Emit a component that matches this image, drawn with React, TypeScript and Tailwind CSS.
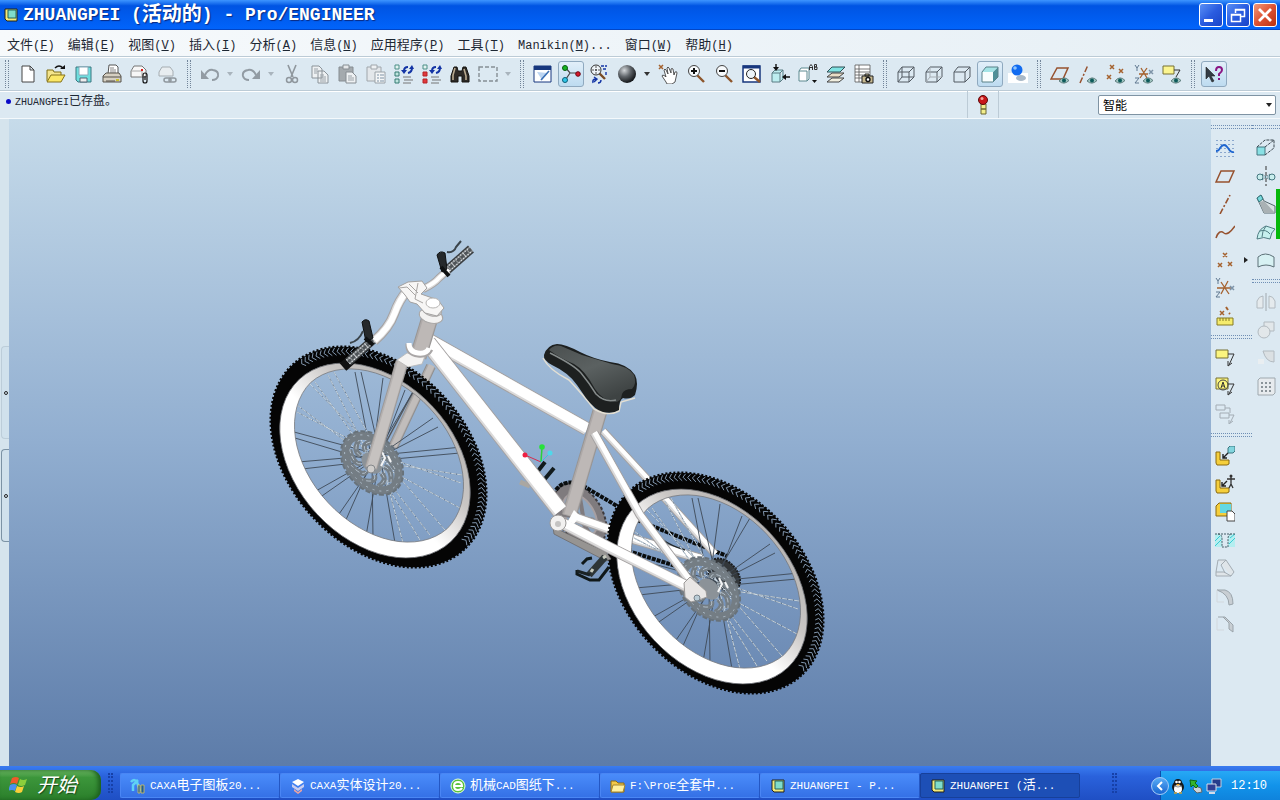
import { Fragment, type ReactNode } from 'react';

const MONO = 'font-["Liberation_Mono","Noto_Sans_CJK_SC",monospace]';

// Latin runs keep the size of the parent, Chinese runs get their own size
function Mixed({ text, cjk }: { text: string; cjk: string }) {
  return (
    <>
      {text.split(/([\u3000-\u9fff]+)/).map((part, i) =>
        i % 2 ? <span key={i} className={cjk}>{part}</span> : <Fragment key={i}>{part}</Fragment>
      )}
    </>
  );
}

/* ---------- icons ---------- */

const X = ({ x, y, c = '#a5622f' }: { x: number; y: number; c?: string }) => (
  <path d={`M${x - 2} ${y - 2}l4 4m0-4l-4 4`} stroke={c} strokeWidth="1.5" />
);

const Eye = () => (
  <>
    <path d="M9 17q5-6 10-.5-5 5-10 .5z" fill="#9fc4c0" stroke="#4b6b6b" strokeWidth=".8" />
    <circle cx="14" cy="16.5" r="2" fill="#0d5a5a" />
  </>
);

const Cube = ({ fill = 'none', back = '' }: { fill?: string; back?: string }) => (
  <>
    <path d="M2 8h11v10H2z" fill={fill} />
    <path d="M2 8l4-5h12l-5 5M13 18l5-5V3" />
    {back && <path d="M2 18l4-5h12M6 13V3" stroke={back} />}
  </>
);

const Tree = ({ c }: { c: string }) => (
  <>
    <path d="M1 1h4v4H1z" fill="#e3f3f0" stroke="#4a8f86" />
    <path d="M1 8h4v4H1zM1 15h4v4H1z" fill={c === 'red' ? '#e2383c' : '#bfe5df'} stroke={c === 'red' ? '#b52227' : '#357b72'} />
    <path d="M10 7q0-4 4-4M18 4q0 4-4 5" stroke="#1334a5" strokeWidth="2" />
    <path d="M7 6h6l-3 4zM15 5l3-4 2 4z" fill="#1334a5" />
    <path d="M9 13h8M10 16h9M9 19h8" stroke="#777" />
  </>
);

const Pipe = () => <path d="M1 6h4v8h9v4l-2 1H2l-1-2z" fill="#f5cf3c" stroke="#8a6a10" />;

const icons: Record<string, ReactNode> = {
  new: <path d="M4 2h8l4 4v12H4zM12 2v4h4" fill="#fff" stroke="#444" />,
  open: (
    <>
      <path d="M1 17V6h6l1 2h7v3" fill="#f4e48c" stroke="#7f6d15" />
      <path d="M1 18l4-7h14l-4 7z" fill="#fbe766" stroke="#85731a" />
      <path d="M9 4q4-4 8 0" stroke="#111" strokeWidth="1.5" /><path d="M14 5h5V1z" fill="#111" />
    </>
  ),
  save: (
    <>
      <path d="M2 3h15v15H4l-2-2z" fill="#6fdede" stroke="#3a7680" />
      <path d="M5 3h9v8H5z" fill="#fff" stroke="#8ab" /><path d="M6 14h7v4H6z" fill="#eee" stroke="#567" />
    </>
  ),
  print: (
    <>
      <path d="M6 10l1-9h7l2 2v8" fill="#fff" stroke="#555" /><path d="M8 4h4M8 6h6M8 8h6" stroke="#888" />
      <path d="M1 12l3-3h13l2 3v6H1z" fill="#d6d0c2" stroke="#56524a" /><path d="M1 13h18M4 17h9" stroke="#55504a" /><path d="M14 15h3v2h-3z" fill="#c8c030" />
    </>
  ),
  attach: (
    <>
      <path d="M1 7l3-5h8l4 4v7H1z" fill="#f7f7f7" stroke="#777" /><path d="M1 7h11v6" stroke="#aaa" /><path d="M11 5h2v2h-2z" fill="#d92020" />
      <path d="M13 17v-6q0-2 2-2t2 2v6q0 2-2 2t-2-2zm2-5v4" stroke="#111" strokeWidth="1.2" />
    </>
  ),
  link: (
    <>
      <path d="M1 8l3-5h8l3 4v5H1z" fill="#e8edf0" stroke="#a6adb2" />
      <rect x="6" y="14" width="7" height="4" rx="2" stroke="#8f979d" strokeWidth="1.5" /><rect x="11" y="14" width="7" height="4" rx="2" stroke="#8f979d" strokeWidth="1.5" />
    </>
  ),
  undo: (
    <>
      <path d="M5 11q3-6 8-5 6 1 5 6-1 4-6 4" stroke="#929ba3" strokeWidth="2" /><path d="M1 6v9h8z" fill="#929ba3" />
    </>
  ),
  redo: (
    <>
      <path d="M15 11q-3-6-8-5-6 1-5 6 1 4 6 4" stroke="#929ba3" strokeWidth="2" /><path d="M19 6v9h-8z" fill="#929ba3" />
    </>
  ),
  cut: (
    <>
      <path d="M6 1l5 12M14 1L9 13" stroke="#8f979d" strokeWidth="1.6" />
      <circle cx="7" cy="16" r="2.5" stroke="#8f979d" strokeWidth="1.5" /><circle cx="13" cy="16" r="2.5" stroke="#8f979d" strokeWidth="1.5" />
    </>
  ),
  copy: (
    <>
      <path d="M2 2h7l3 3v9H2zM8 7h6l4 4v8H8z" fill="#eef1f3" stroke="#8b9399" />
      <path d="M4 5h4M4 7h4M4 9h3M10 11h4M10 13h6M10 15h6M10 17h6" stroke="#9aa2a8" />
    </>
  ),
  paste: (
    <>
      <path d="M1 3h14v14H1z" fill="#a4aaae" stroke="#868d92" /><path d="M5 1h6v4H5z" fill="#e5e8ea" stroke="#868d92" />
      <path d="M8 8h6l4 4v7H8z" fill="#eef1f3" stroke="#868d92" /><path d="M10 12h4M10 14h6M10 16h6" stroke="#9aa2a8" />
    </>
  ),
  pasteSpecial: (
    <>
      <path d="M1 3h14v14H1z" fill="#e3e7ea" stroke="#a0a6ab" /><path d="M5 1h6v4H5z" fill="#eef1f3" stroke="#a0a6ab" />
      <path d="M9 8h10v11H9z" fill="#f4f6f7" stroke="#9aa2a8" /><path d="M11 11h2M11 14h2M11 17h2M14 11h4M14 14h4M14 17h4" stroke="#7f93a6" />
    </>
  ),
  regen: <Tree c="green" />,
  regenManager: <Tree c="red" />,
  find: (
    <>
      <path d="M4 3h3l1 4h4l1-4h3l3 9v6h-7v-6H8v6H1v-6z" fill="#2e2a26" stroke="#15120f" />
      <path d="M5 4l-2 7v5M14 5l2 7v4" stroke="#b9aa90" strokeWidth="1.6" />
    </>
  ),
  select: <path d="M1 3h18v14H1z" stroke="#858e95" strokeDasharray="4 2" strokeWidth="1.4" />,
  repaint: (
    <>
      <path d="M1 2h17v16H1z" fill="#fff" stroke="#17377e" /><path d="M1 2h17v4H1z" fill="#17377e" />
      <path d="M4 8l11 1-6 7z" fill="#bcd5f2" /><path d="M16 7l-8 9" stroke="#3a6fb5" strokeWidth="1.6" />
    </>
  ),
  spin: (
    <>
      <path d="M4 3l5 6h8M9 9l-4 6" stroke="#444" strokeWidth="1.2" />
      <circle cx="4" cy="4" r="2.5" fill="#16b322" stroke="#075d0d" /><circle cx="17" cy="10" r="2.3" fill="#d6182a" stroke="#6e0712" /><circle cx="4" cy="16" r="2.5" fill="#31c6e8" stroke="#0b5f78" />
    </>
  ),
  orient: (
    <>
      <path d="M10 9l6 6" stroke="#7a4a22" strokeWidth="2.4" /><circle cx="7" cy="6" r="5" fill="#eef4f8" stroke="#333" /><circle cx="7" cy="6" r="1" fill="#333" /><path d="M7 2v2M7 8v2M3 6h2M9 6h2" stroke="#555" />
      <path d="M12 2h6M14 5h4M17 8v4" stroke="#1334a5" strokeWidth="1.4" strokeDasharray="3 1" /><path d="M4 19q-1-4 3-4m-2-2l3 2-3 3M9 19q3 0 3-3" stroke="#1334a5" strokeWidth="1.4" />
    </>
  ),
  sphere: <circle cx="10" cy="10" r="9" fill="url(#ball)" />,
  pan: (
    <>
      <X x={3} y={3} />
      <path d="M8 18l-4-6q0-2 3 0l1 1-2-7q1-2 2 0l2 4-1-6q1-2 2 0l2 5V5q1-1 2 0l1 6 1-3q2-1 2 1l-2 9-3 2H9z" fill="#fff" stroke="#444" strokeWidth=".9" />
    </>
  ),
  zoomIn: (
    <>
      <path d="M11 11l7 7" stroke="#8d552a" strokeWidth="2.4" /><circle cx="8" cy="7" r="5.5" fill="#f7fafc" stroke="#444" /><path d="M5 7h6M8 4v6" stroke="#111" strokeWidth="2" />
    </>
  ),
  zoomOut: (
    <>
      <path d="M11 11l7 7" stroke="#8d552a" strokeWidth="2.4" /><circle cx="8" cy="7" r="5.5" fill="#f7fafc" stroke="#444" /><path d="M5 7h6" stroke="#111" strokeWidth="2" />
    </>
  ),
  refit: (
    <>
      <path d="M1 2h17v16H1z" fill="#fff" stroke="#17377e" strokeWidth="1.5" /><path d="M1 3h17" stroke="#17377e" strokeWidth="3" />
      <path d="M12 13l6 5" stroke="#8d552a" strokeWidth="2.4" /><circle cx="9" cy="10" r="4.5" fill="#eef5fa" stroke="#222" />
    </>
  ),
  reorient: (
    <>
      <path d="M2 9h8v9H2zM2 9l3-3h8l-3 3M10 18l3-3V6" fill="#bdeef0" stroke="#5b7d84" />
      <path d="M6 0v5M20 13h-5" stroke="#111" strokeWidth="1.4" /><path d="M3 3h6L6 7zM16 10v6l-4-3z" fill="#111" />
    </>
  ),
  views: (
    <>
      <path d="M1 7l2-3h8v11l-2 2H1zM1 7h8v10" fill="#fff" stroke="#5c8a90" /><path d="M14 16h5l-2.500 3z" fill="#111" />
      <path d="M11.500 6V2.500l1.500-2 1.500 2V6m-3-2.500h3M16.500.5v5h2.500v-2.500h-2.500h2v-2.500z" stroke="#333" />
    </>
  ),
  layers: (
    <>
      <path d="M1 18l5-4h12l-5 4z" fill="#f1efe0" stroke="#444" /><path d="M1 13l5-4h12l-5 4z" fill="#e9ddc6" stroke="#444" /><path d="M1 8l5-5h13l-5 5z" fill="#80e3e3" stroke="#2f4f55" />
    </>
  ),
  viewManager: (
    <>
      <path d="M1 1h15v17H1zM5 1v17M1 5h15M1 8h15M1 11h15M1 14h15" fill="#fff" stroke="#555" strokeWidth=".8" />
      <path d="M8 12h11v7H8zM11 10h4v2h-4z" fill="#c7b990" stroke="#222" /><circle cx="14" cy="15.500" r="2" fill="#fff" stroke="#111" strokeWidth="1.4" />
    </>
  ),
  wireframe: <g stroke="#525a62"><Cube back="#525a62" /></g>,
  hidden: <g stroke="#525a62"><Cube back="#a6adb3" /></g>,
  noHidden: <g stroke="#525a62"><Cube /></g>,
  shading: (
    <>
      <path d="M13 8l5-5v10l-5 5z" fill="#4f9098" /><path d="M2 8l4-5h12l-5 5z" fill="#a5e4e6" /><path d="M2 8h11v10H2z" fill="#f8fdfd" />
      <path d="M2 8v10h11l5-5V3H6z" stroke="#5b8188" />
    </>
  ),
  realism: (
    <>
      <path d="M0 9h20v10H0z" fill="#fff" /><ellipse cx="13" cy="14" rx="5" ry="3" fill="#a9b9c8" />
      <circle cx="9" cy="6" r="5.500" fill="#116bf0" /><circle cx="7" cy="4" r="1.800" fill="#8dc4ff" />
    </>
  ),
  planeDisplay: <><path d="M1 15L7 4h11l-5 11z" stroke="#96512e" strokeWidth="1.5" /><Eye /></>,
  axisDisplay: <><path d="M2 19L10 1" stroke="#96512e" strokeWidth="1.5" strokeDasharray="6 2 2 2" /><Eye /></>,
  pointDisplay: <><X x={6} y={3} /><X x={15} y={7} /><X x={3} y={13} /><Eye /></>,
  csysDisplay: <><path d="M5 10h9M7 4l6 10M13 4L6 14" stroke="#a5622f" strokeWidth="1.3" /><X x={17} y={8} c="#7d93a8" /><path d="M1 1l2 3 2-3M3 4v3M1 14h4l-4 5h4" stroke="#607890" /><Eye /></>,
  noteDisplay: <><path d="M1 2h11v8H1z" fill="#fbf590" stroke="#777035" /><path d="M12 6h6l-4 7" stroke="#333" /><Eye /></>,
  help: <><path d="M2 3v12l3-3 3 6 2-1-3-5h4z" fill="#333b44" stroke="#222" strokeWidth=".6" /><path d="M12 7q0-4 3-4t3 3q0 2-3 4v2M15 14v2" stroke="#8b1583" strokeWidth="2" /></>,

  // feature tools
  sketch: <><path d="M2 2v18M6 2v18M10 2v18M14 2v18M18 2v18" stroke="#3b67a8" strokeDasharray="1 3" /><path d="M1 13q3 0 4-3 4-6 8 0 3 5 6 4" stroke="#1f66d0" strokeWidth="1.800" /></>,
  plane: <path d="M1 16L6 5h13l-5 11z" stroke="#96512e" strokeWidth="1.500" />,
  axis: <path d="M5 20L15 1" stroke="#96512e" strokeWidth="1.600" strokeDasharray="6 2 2 2" />,
  curve: <path d="M1 16q3-9 8-5 4 3 11-7" stroke="#96512e" strokeWidth="1.500" />,
  point: <><X x={10} y={5} /><X x={5} y={15} /><X x={15} y={14} /></>,
  csys: <><path d="M2 10h14M6 4l8 12M13 3L6 16" stroke="#a5622f" strokeWidth="1.300" /><X x={17} y={10} c="#7d93a8" /><path d="M1 0l2 3 2-3M3 3v3M1 14h4l-4 5h4" stroke="#607890" /></>,
  analysis: <><X x={7} y={7} /><path d="M11 1l2 3M14 7l1 1" stroke="#a5622f" strokeWidth="2" /><path d="M2 12h16v7H2z" fill="#f6ec6c" stroke="#857a25" /><path d="M5 12v3M8 12v3M11 12v3M14 12v3" stroke="#857a25" /></>,
  note: <><path d="M1 2h12v8H1z" fill="#fbf57f" stroke="#777035" /><path d="M13 6h6l-5 11m-1-4v5l4-3" stroke="#333" /></>,
  noteA: <><path d="M1 2h12v11H1z" fill="#fbf57f" stroke="#777035" /><circle cx="8" cy="9" r="5" stroke="#444" /><path d="M6 12l2-6 2 6M7 10h2" stroke="#333" /><path d="M13 8h6l-5 10m-1-3v4l4-3" stroke="#333" /></>,
  noteRef: <path d="M1 1h9v5H1zM10 4h5v5M5 9h9v5H5zM14 11h5l-4 8m-1-3v4l4-3" stroke="#a3acb4" />,
  assemble: <><Pipe /><path d="M13 2l2-2h5v5l-2 2h-5z" fill="#83d5de" stroke="#3a7680" /><path d="M13 7l-5 5m0-4v4h4" stroke="#222" strokeWidth="1.400" /></>,
  manikin: <><Pipe /><circle cx="16" cy="2" r="1.500" fill="#333" /><path d="M12 5h8M16 3v7l-2 4M16 10l2 4" stroke="#333" strokeWidth="1.300" /><path d="M12 7l-5 5m0-4v4h4" stroke="#222" strokeWidth="1.400" /></>,
  create: <><path d="M1 4l3-3h12v10l-4 3H1z" fill="#f5cf3c" stroke="#8a6a10" /><path d="M5 2h11v9H5z" fill="#62d8e4" /><path d="M12 9h5l3 3v7h-8z" fill="#fff" stroke="#444" /></>,
  hole: (
    <>
      <path d="M0 4h3q4 0 4 5v8H0zM20 4h-3q-4 0-4 5v8h7z" fill="#b4eef0" /><path d="M5 6l-5 5M6 10l-6 6M15 8l5-4M14 14l6-6" stroke="#38cbd4" />
      <path d="M0 4h20M3 4q4 0 4 5v8h6V9q0-5 4-5" stroke="#425d66" strokeDasharray="2 1" />
    </>
  ),
  cutSolid: <path d="M3 2h8l8 12-3 4H1v-4h8l7 4M3 2L1 14M6 7l5-5M6 7l4 8" fill="#dfe5e9" stroke="#a3acb3" />,
  round: <><path d="M2 4h8q8 2 8 14l-4 1Q14 8 2 4z" fill="#c8ced3" stroke="#9aa4ab" /><path d="M2 4v12h7" stroke="#d2d8dd" /></>,
  chamfer: <><path d="M3 3h7l8 8v7l-4-3V9L8 3" fill="#c8ced3" stroke="#9aa4ab" /><path d="M2 4v12h7" stroke="#d2d8dd" /></>,
  extrude: <><path d="M1 9h8v8H1z" fill="#89e0e4" stroke="#467780" /><path d="M1 9l8-7h9l-9 7M9 17l9-7V2" stroke="#3c4850" strokeDasharray="3 1" /></>,
  revolve: <><path d="M10 0v20" stroke="#333" strokeDasharray="4 2" /><circle cx="4" cy="11" r="3" fill="#c9eeee" stroke="#467780" /><circle cx="16" cy="11" r="3" fill="#c9eeee" stroke="#467780" /><path d="M6 8l8 6M6 14l8-6" stroke="#467780" strokeDasharray="2 1" /></>,
  sweep: <><path d="M1 4l4-3 3 6 11 5v7H8z" fill="#d9e1e3" stroke="#54666c" /><path d="M3 8l5-1 11 12H8z" fill="#a9b1b4" /><path d="M1 4l4-3 2 4-4 3z" fill="#79dadd" stroke="#35757c" /></>,
  blend: <path d="M1 17q1-10 9-13l9 3q-4 3-5 10-6-3-13 0zM4 9q6-2 10 3M10 4q-4 5-4 11" fill="#c6f0ee" stroke="#4f7c82" />,
  style: <path d="M2 17V7q7-6 16 0v10q-8-4-16 0z" fill="#d7f1f3" stroke="#5d7178" />,
  mirror: <><path d="M10 1v18" stroke="#a0a8ae" /><path d="M7 4v12H1V9q2-5 6-5zM13 4v12h6V9q-2-5-6-5z" fill="#e5eaed" stroke="#b2bac0" /></>,
  merge: <><path d="M8 2h10v9H8z" fill="#e2e7ea" stroke="#b2bac0" /><circle cx="8" cy="12" r="6" fill="#e2e7ea" stroke="#b2bac0" /></>,
  trim: <><path d="M7 3h11v11q-8 0-11-11z" fill="#dbe0e3" stroke="#b2bac0" /><path d="M2 11h6v5H2z" fill="#e9eef1" /></>,
  pattern: <><path d="M2 4l2-2h15v15l-2 2H2z" fill="#e7ebee" stroke="#9fa8ae" /><path d="M5 7h11M5 11h11M5 15h11" stroke="#8b949a" strokeWidth="2" strokeDasharray="2 2" /></>,
};

function Glyph({ name }: { name: string }) {
  return (
    <svg viewBox="0 0 20 20" className="size-5" fill="none" aria-hidden="true">
      {icons[name]}
    </svg>
  );
}

function Tool({ name, active = false }: { name: string; active?: boolean }) {
  return (
    <button
      aria-label={name}
      className={`m-px flex size-[26px] shrink-0 items-center justify-center rounded-[3px] border ${
        active ? 'border-[#8fa9bf] bg-linear-to-b from-[#e2eff9] to-[#bddbf0]' : 'border-transparent hover:bg-white/50'
      }`}
    >
      <Glyph name={name} />
    </button>
  );
}

function Caret({ color }: { color: string }) {
  return (
    <svg viewBox="0 0 13 6" className="h-[6px] w-[13px] shrink-0" aria-hidden="true">
      <path d="M3 1h6L6 5z" fill={color} />
    </svg>
  );
}

const Grip = () => (
  <div className="flex w-[14px] shrink-0 justify-center">
    <div className="h-7 w-[4px] border-x border-dotted border-[#73859a]" />
  </div>
);

const HGrip = () => (
  <div className="flex h-[14px] shrink-0 items-center">
    <div className="h-[4px] w-full border-y border-dotted border-[#6f8fb5]" />
  </div>
);

/* ---------- title, menu, toolbar ---------- */

function AppIcon() {
  return (
    <svg viewBox="0 0 16 16" className="size-4 shrink-0" aria-hidden="true">
      <path d="M2 2h12v12H4l-2-2z" fill="#f4ea79" stroke="#23231a" />
      <path d="M5 3h8v8H5z" fill="#7fdccb" stroke="#276258" />
    </svg>
  );
}

function TitleBar() {
  const box = 'flex size-6 items-center justify-center rounded-[3px] border border-white';
  const blue = 'bg-linear-to-br from-[#5b8ff5] via-[#2a5ce0] to-[#1a45c8]';
  return (
    <header className="flex h-[30px] shrink-0 items-center border-b border-[#0246c6] bg-linear-to-b from-[#3d95ff] via-[#0054e3] via-20% to-[#0164fb] px-[3px]">
      <AppIcon />
      <h1 className={`${MONO} ml-1 flex-1 truncate text-[18px] leading-[28px] font-bold whitespace-pre text-white [text-shadow:1px_1px_1px_#0a2a80]`}>
        <Mixed text="ZHUANGPEI (活动的) - Pro/ENGINEER" cjk="align-[-1px] text-[20px] leading-[20px]" />
      </h1>
      <div className="flex gap-[3px]">
        <button aria-label="最小化" className={`${box} ${blue}`}>
          <svg viewBox="0 0 22 22" className="size-[22px]"><path d="M4 15h9v3H4z" fill="#fff" /></svg>
        </button>
        <button aria-label="还原" className={`${box} ${blue}`}>
          <svg viewBox="0 0 22 22" className="size-[22px]" fill="none" stroke="#fff">
            <path d="M8.500 9V5.500h9v7H14M8 6h10" strokeWidth="1.500" /><path d="M4.500 10.500h9v7h-9zM4 11h10" strokeWidth="1.500" />
          </svg>
        </button>
        <button aria-label="关闭" className={`${box} bg-linear-to-br from-[#f0977a] via-[#dd5132] to-[#b9310f]`}>
          <svg viewBox="0 0 22 22" className="size-[22px]"><path d="M5 5l12 12M17 5L5 17" stroke="#fff" strokeWidth="2.800" /></svg>
        </button>
      </div>
    </header>
  );
}

const menus = [
  ['文件', 'F'], ['编辑', 'E'], ['视图', 'V'], ['插入', 'I'], ['分析', 'A'], ['信息', 'N'],
  ['应用程序', 'P'], ['工具', 'T'], ['Manikin', 'M', '...'], ['窗口', 'W'], ['帮助', 'H'],
];

function MenuBar() {
  return (
    <nav className={`${MONO} flex h-[26px] shrink-0 items-end gap-[13px] bg-linear-to-r from-[#f7fafc] to-[#e6eff5] pb-px pl-[7px] text-[12px] leading-[18px] text-[#1d2733]`}>
      {menus.map(([label, key, tail = '']) => (
        <button key={key} className="whitespace-nowrap">
          <Mixed text={label} cjk="text-[13px]" />(<u>{key}</u>){tail}
        </button>
      ))}
    </nav>
  );
}

// "|" is a grip, "v" a drop-down arrow (upper case when enabled), "*" marks a pressed button
const toolbar = (
  '| new open save print attach link | undo v redo v cut copy paste pasteSpecial regen regenManager find select v | ' +
  'repaint spin* orient sphere V pan zoomIn zoomOut refit reorient views layers viewManager | ' +
  'wireframe hidden noHidden shading* realism | planeDisplay axisDisplay pointDisplay csysDisplay noteDisplay | help*'
).split(' ');

function Toolbar() {
  return (
    <div className="flex h-[34px] shrink-0 items-center overflow-hidden border-t border-[#bccbd6] bg-[#dce9f2] shadow-[inset_0_1px_0_#fff]">
      {toolbar.map((item, i) => {
        if (item === '|') return <Grip key={i} />;
        if (item === 'v') return <Caret key={i} color="#a9b4bd" />;
        if (item === 'V') return <Caret key={i} color="#333" />;
        return <Tool key={i} name={item.replace('*', '')} active={item.endsWith('*')} />;
      })}
    </div>
  );
}

function StatusRow() {
  return (
    <div className="flex h-[29px] shrink-0 border-y border-t-[#bccbd6] border-b-[#f4f9fc] bg-[#dce9f2] shadow-[inset_0_1px_0_#fff]">
      <p className={`${MONO} flex flex-1 items-start pt-[2px] pl-[6px] text-[10px] leading-[18px] text-[#1d2733]`}>
        <span className="mt-[6px] mr-1 size-[5px] rounded-full bg-[#0a0ac8]" />
        <span><Mixed text="ZHUANGPEI已存盘。" cjk="text-[12px]" /></span>
      </p>
      <div className="flex w-8 items-center justify-center border-x border-[#bccbd6]">
        <svg viewBox="0 0 12 20" className="h-5 w-3" aria-hidden="true">
          <path d="M4 9h5v5H4zM4 14h5v5H4z" fill="#f2ee8c" stroke="#6a6630" />
          <circle cx="6" cy="5" r="4.500" fill="#c8171b" stroke="#5b0c0c" /><circle cx="5" cy="3.500" r="1.500" fill="#f5a29a" />
        </svg>
      </div>
      <div className="flex w-[281px] items-center justify-end pr-1">
        <div className="relative flex w-[178px]">
          <select aria-label="选择过滤器" className='h-5 w-full appearance-none rounded-[2px] border border-[#7f93a3] bg-white pl-1 font-["Noto_Sans_CJK_SC",sans-serif] text-[12px] leading-[18px] text-black'>
            <option>智能</option>
          </select>
          <span className="pointer-events-none absolute inset-y-0 right-0 flex items-center"><Caret color="#222" /></span>
        </div>
      </div>
    </div>
  );
}

/* ---------- model ---------- */

const TILT = (47 * Math.PI) / 180;

function at(cx: number, cy: number, rx: number, ry: number, deg: number) {
  const t = (deg * Math.PI) / 180;
  const u = rx * Math.cos(t);
  const v = ry * Math.sin(t);
  const x = cx + u * Math.cos(TILT) - v * Math.sin(TILT);
  const y = cy + u * Math.sin(TILT) + v * Math.cos(TILT);
  return `${x.toFixed(1)} ${y.toFixed(1)}`;
}

function ring(cx: number, cy: number, rx: number, ry: number) {
  const a = at(cx, cy, rx, ry, 0);
  const b = at(cx, cy, rx, ry, 180);
  return `M${a}A${rx} ${ry} 47 0 1 ${b}A${rx} ${ry} 47 0 1 ${a}z`;
}

const TYRE = ring(378.5, 457, 126, 89);
const RIM = ring(375, 460.5, 111, 79);
const HOLE = ring(379, 455.5, 100, 71);

const treads = Array.from({ length: 64 }, (_, i) => {
  const t = 186 + i * 2.7;
  return `M${at(378.5, 457, 125, 88, t + 1)}L${at(378.5, 457, 121, 85, t - 1)}L${at(378.5, 457, 117, 82, t + 0.6)}`;
}).join('');

// outer ends of the spokes, clockwise from the top
const darkSpokes = [
  [355, 372], [361, 372], [383, 378], [405, 390], [413, 392], [433, 418], [438, 427], [462, 447], [460, 453],
  [395, 543], [373, 538], [366, 536], [345, 522], [337, 517], [319, 498], [314, 492], [302, 469], [298, 462], [295, 438], [294, 432],
];
const lightSpokes = [
  [328, 375], [334, 372], [462, 475], [461, 483], [460, 508], [445, 530], [430, 535], [403, 543], [420, 540], [297, 412], [297, 405], [310, 384], [315, 382],
];
const spokePath = (ends: number[][]) => ends.map(([x, y], i) => `M${x} ${y}L${i % 2 ? 380 : 372} ${i % 2 ? 455 : 461}`).join('');

const blades = Array.from({ length: 9 }, (_, i) => {
  const t = i * 40;
  return `M${at(372, 463, 14, 10, t)}Q${at(372, 463, 24, 17, t)} ${at(372, 463, 27, 19, t + 38)}`;
}).join('');

function Wheel() {
  return (
    <g fill="none">
      <path d={spokePath(darkSpokes)} stroke="#3e4a57" strokeWidth=".9" />
      <path d={spokePath(lightSpokes)} stroke="#566779" strokeWidth=".9" />
      <path d={spokePath(lightSpokes)} stroke="#d3dfe8" strokeWidth=".9" strokeDasharray="5 1" />
      <path d={TYRE + RIM} fill="#050505" fillRule="evenodd" />
      <path d={TYRE} stroke="#050505" strokeWidth="2.500" strokeDasharray="2 2" />
      <path d={treads} stroke="#8ea6bf" strokeWidth=".9" />
      <path d={RIM + HOLE} fill="url(#rim)" fillRule="evenodd" />
      <path d={HOLE} stroke="#77797c" strokeWidth=".8" />
      <path d={RIM} stroke="#5c5c5e" strokeWidth=".8" />
    </g>
  );
}

function Disc() {
  return (
    <g fill="none">
      <path d={ring(372, 463, 32, 22)} stroke="#747d84" strokeWidth="8" />
      <path d={ring(372, 463, 36, 26)} stroke="#68727a" strokeWidth="2" strokeDasharray="5 2" />
      <path d={ring(372, 463, 33, 23)} stroke="#aebdcb" strokeWidth="1" strokeDasharray="2 5" />
      <path d={blades} stroke="#747d84" strokeWidth="5" />
      <path d={ring(372, 463, 12, 9)} fill="#8b9298" />
      <path d={blades} stroke="#c3cfda" strokeWidth=".8" strokeDasharray="5 3" />
      <path d="M382 452l3 6-4 8m7-10l3 6" stroke="#f3f4f5" strokeWidth="2" />
    </g>
  );
}

// a tube is a dark line with a shade and a highlight on its upper side
function Tube({ d, w, light = '#ffffff', dark = '#a5a2a2' }: { d: string; w: number; light?: string; dark?: string }) {
  return (
    <g fill="none" strokeLinejoin="round">
      <path d={d} stroke={dark} strokeWidth={w} />
      <path d={d} stroke={light} strokeWidth={w - 2} opacity=".6" />
      <path d={d} stroke={light} strokeWidth={w - 4} transform="translate(.7 -.7)" />
    </g>
  );
}

const GripBar = ({ d }: { d: string }) => (
  <g fill="none">
    <path d={d} stroke="#3a3e41" strokeWidth="9" />
    <path d={d} stroke="#84898c" strokeWidth="6" />
    <path d={d} stroke="#e4e7e9" strokeWidth="6" strokeDasharray="1 2" />
    <path d={d} stroke="#505559" strokeWidth="3" strokeDasharray="4 1" />
  </g>
);

function Bike() {
  return (
    <svg viewBox="9 119 1202 647" className="h-full w-full" role="img" aria-label="ZHUANGPEI">
      <defs>
        <linearGradient id="rim" x1="0" y1="1" x2="1" y2="0">
          <stop offset=".45" stopColor="#fff" /><stop offset=".62" stopColor="#c9c6c4" /><stop offset="1" stopColor="#a3a1a0" />
        </linearGradient>
        <linearGradient id="saddle" x1="0" y1="0" x2=".6" y2="1">
          <stop offset="0" stopColor="#4b5050" /><stop offset=".5" stopColor="#5b6161" /><stop offset="1" stopColor="#3e4343" />
        </linearGradient>
        <radialGradient id="ball" cx=".35" cy=".3" r=".7">
          <stop offset="0" stopColor="#d4d8db" /><stop offset=".5" stopColor="#62676c" /><stop offset="1" stopColor="#15181b" />
        </radialGradient>
      </defs>

      {/* far side of the fork and front wheel */}
      <Tube d="M431 366L393 447" w={10} light="#c1bdbb" dark="#8f8d8c" />
      <path d="M414 390L384 446" stroke="#55585c" strokeWidth="1.500" />
      <Wheel />
      <Disc />

      {/* chainring, chain and cassette */}
      <ellipse cx="580" cy="515" rx="35" ry="22" transform="rotate(58 580 515)" fill="#7f7b7e" stroke="#3c3a3d" strokeWidth="2" strokeDasharray="3 2" />
      <ellipse cx="580" cy="515" rx="23" ry="14" transform="rotate(58 580 515)" fill="#8ea4bd" stroke="#a79fa1" strokeWidth="2" />
      <path d="M568 500l22 34M580 498l6 36M560 514l34 6" stroke="#7f7b7e" strokeWidth="4" />
      <path d="M556 490q8-11 24-6l37 22M637 520l90 36M628 551l54 17" stroke="#0a0d0e" strokeWidth="4" strokeDasharray="4 1" fill="none" />
      <ellipse cx="724" cy="575" rx="19" ry="13" transform="rotate(47 724 575)" fill="#33373a" stroke="#1b1d1f" strokeWidth="2" strokeDasharray="2 1" />
      <Tube d="M603 431L650 482L715 554" w={8} />
      <Tube d="M574 517L608 529L636 540L702 559" w={10} />
      <path d="M645 520q12 22 40 30" stroke="#22292c" strokeWidth="1.500" fill="none" />

      {/* far pedal */}
      <path d="M519 467l6 8M544 480l10-12M538 471l7-9" stroke="#111a1c" strokeWidth="4" />
      <path d="M520 482l10 4" stroke="#aaa7a2" strokeWidth="5" />

      <g transform="translate(337 126)">
        <Wheel />
        <Disc />
      </g>

      {/* crank and near pedal */}
      <path d="M553 527l53 25 5 7-5 2-52-27z" fill="#969492" stroke="#6c6a69" strokeWidth=".8" />
      <path d="M577 570v4l13 6 9 0 10-13M582 564l5-5 5-1" stroke="#101819" strokeWidth="3" fill="none" />
      <path d="M589 575l16-18" stroke="#2d3537" strokeWidth="7" />
      <path d="M591 572l2-3M603 558l3-2" stroke="#c5c9bd" strokeWidth="3" />
      <path d="M577 571l13 4" stroke="#1a2224" strokeWidth="3" />

      {/* frame */}
      <Tube d="M429 340L587 429" w={14} />
      <Tube d="M600 411L569 516" w={15} light="#bdb8b6" dark="#989594" />
      <Tube d="M428 343L560 511" w={17} />
      <Tube d="M594 433L640 515L700 595" w={9} />
      <Tube d="M558 521L608 547L690 588" w={12} />
      <path d="M684 583l6-6 16 14 1 6-8 3-8 2-6-5z" fill="#e8e6e5" stroke="#9b9998" />
      <circle cx="697" cy="598" r="3" fill="#b9ccd6" stroke="#77838b" />
      <circle cx="558" cy="523" r="8" fill="#f2f1f0" stroke="#9b9998" />
      <circle cx="558" cy="524" r="3" fill="#c4c3c2" />
      <path d="M574 510l6 6-6 8-6-3z" fill="#fff" />

      {/* saddle */}
      <path d="M543 358q6 12 26 22 15 16 25 29 14 8 25 2l2-9 14-4" stroke="#e3dfd3" strokeWidth="1.500" fill="none" />
      <path d="M544 355q3-10 13-11 8 0 23 8 14 7 30 10 18 2 25 13 4 8 0 20-5 5-12 3-4 2-4 12-6 4-16 2-8-2-17-14l-9-13q-8-12-25-20-9-5-8-10z" fill="#1d2020" />
      <path d="M549 350q5-6 12-4l21 9 30 9q16 2 22 11 3 9-2 14-8 0-10 5-1 8-7 8-13-2-20-13-10-19-21-25-14-6-25-14z" fill="url(#saddle)" />
      <path d="M550 353q24 12 31 20 9 11 15 21 9 9 20 6" stroke="#858b8b" strokeWidth="1.500" fill="none" />

      {/* fork, head tube */}
      <Tube d="M431 314L418 357" w={17} light="#bdb8b6" dark="#989594" />
      <Tube d="M402 362L371 468" w={13} light="#c6c2c0" dark="#9c9998" />
      <path d="M397 360l10-7 18 3-3 8-14 3z" fill="#f4f3f2" stroke="#b8b6b5" strokeWidth=".8" />
      <path d="M409 344q-1 9 9 10 9 1 12-5" stroke="#a9a6a6" strokeWidth="7" fill="none" />
      <path d="M409 343q0 9 9 10 9 1 11-5" stroke="#fff" strokeWidth="5" fill="none" />
      <circle cx="371" cy="469" r="4" fill="#cfcdcb" stroke="#85888b" />
      <ellipse cx="431" cy="316" rx="12" ry="7" transform="rotate(15 431 316)" fill="#f3f2f1" stroke="#aaa8a7" />
      <ellipse cx="432" cy="310" rx="10" ry="6" transform="rotate(15 432 310)" fill="#d6d3d1" stroke="#aaa8a7" />

      {/* handlebar */}
      <path d="M343 367l9-8" stroke="#111" strokeWidth="10" />
      <GripBar d="M348 362L374 339" />
      <GripBar d="M446 271L471 249" />
      <Tube d="M374 341Q389 328 394 314T407 291" w={10} />
      <Tube d="M423 289Q434 284 439 278L448 270" w={8} />
      <path d="M398 287l10-5 14-1 5 7-6 6 17 6 6 8-7 8-12-3-8-9-7-2-5-7z" fill="#f7f6f5" stroke="#a3a1a0" />
      <path d="M399 288l8-1 9 9M409 284l9 9M418 283l-3 16 8 4" stroke="#a8a5a3" fill="none" />
      <ellipse cx="433" cy="303" rx="7" ry="5" fill="#fff" stroke="#b7b5b3" />
      <path d="M362 322q3-4 7-1l4 17-7 4zM437 255q3-5 8-2l2 16-5 3z" fill="#26292b" stroke="#0f1112" />
      <path d="M350 343q9-2 13-12M447 252q7 1 9-5l5-6" stroke="#3a444b" strokeWidth="2" fill="none" />
      <path d="M373 345l-8-7M449 276l-8-9" stroke="#0f1112" strokeWidth="4" />

      {/* spin centre */}
      <path d="M541 462l-16-7" stroke="#d62c4d" />
      <path d="M541 462l1-15" stroke="#2ad13a" strokeWidth="1.500" />
      <path d="M541 462l9-9" stroke="#37c5dc" />
      <circle cx="525" cy="455" r="2.500" fill="#ef1f42" /><circle cx="542" cy="447" r="2.800" fill="#27e23b" /><circle cx="550" cy="453" r="2.500" fill="#4fd8ea" />
    </svg>
  );
}

/* ---------- side panels ---------- */

const leftTools = [
  ['sketch', 'plane', 'axis', 'curve', 'point', 'csys', 'analysis'],
  ['note', 'noteA', 'noteRef'],
  ['assemble', 'manikin', 'create', 'hole', 'cutSolid', 'round', 'chamfer'],
];
const rightTools = [
  ['extrude', 'revolve', 'sweep', 'blend', 'style'],
  ['mirror', 'merge', 'trim', 'pattern'],
];

function ToolColumn({ groups }: { groups: string[][] }) {
  return (
    <>
      {groups.map((group, i) => (
        <Fragment key={i}>
          <HGrip />
          {group.map((name) => (
            <div key={name} className="flex items-center">
              <Tool name={name} />
              {name === 'point' && (
                <svg viewBox="0 0 6 8" className="ml-1 h-2 w-[6px]"><path d="M1 1l4 3-4 3z" fill="#222" /></svg>
              )}
            </div>
          ))}
        </Fragment>
      ))}
    </>
  );
}

function FeatureTools() {
  return (
    <aside className="relative flex w-[69px] shrink-0 bg-[#dce9f2] pt-px">
      <div className="flex flex-1 flex-col"><ToolColumn groups={leftTools} /></div>
      <div className="flex w-7 flex-col"><ToolColumn groups={rightTools} /></div>
      <span className="absolute top-[70px] right-0 h-[50px] w-1 bg-[#06b80c]" />
    </aside>
  );
}

function Splitter({ tone }: { tone: string }) {
  return (
    <button aria-label="展开面板" className={`flex h-[93px] w-full items-center justify-center rounded-l-[4px] border-y border-l ${tone}`}>
      <span className="size-[4px] rounded-full border border-[#222]" />
    </button>
  );
}

/* ---------- taskbar ---------- */

const taskIcons: Record<string, ReactNode> = {
  caxa: <><path d="M1 4q3-4 6 0l3 9M3 13V7l5-5" stroke="#5fd2f5" strokeWidth="2.500" fill="none" /><path d="M8 7h2v8H8zM11 7h3v8h-3z" fill="#1d5d98" stroke="#d7c35b" strokeWidth=".8" /></>,
  solid: <><path d="M2 4l6-3 6 3-6 4z" fill="#fff" /><path d="M2 6l6 4 6-4v3l-6 4-6-4z" fill="#c8cdf0" /><path d="M4 11l4 3 4-3v2l-4 3-4-3z" fill="#e9a2a2" /></>,
  browser: <><circle cx="8" cy="8" r="7" fill="#5ac23c" stroke="#e6ffe0" /><path d="M4 8h8q0-4-4-4T4 8q0 4 4 4 3 0 4-2" stroke="#fff" strokeWidth="2" fill="none" /></>,
  folder: <><path d="M1 3h5l2 2h6v9H1z" fill="#f2c84a" stroke="#8b6a14" /><path d="M3 7h12l-2 7H1z" fill="#fff0a0" stroke="#a5842a" /></>,
};

const tasks = [
  { icon: 'caxa', text: 'CAXA电子图板20...' },
  { icon: 'solid', text: 'CAXA实体设计20...' },
  { icon: 'browser', text: '机械CAD图纸下...' },
  { icon: 'folder', text: 'F:\\ProE全套中...' },
  { icon: 'app', text: 'ZHUANGPEI - P...' },
  { icon: 'app', text: 'ZHUANGPEI (活...', current: true },
];

const TaskGrip = () => (
  <div className="flex w-[19px] shrink-0 items-center justify-center">
    <div className="h-5 w-[5px] border-x-2 border-dotted border-[#1640a8]" />
  </div>
);

function Taskbar() {
  return (
    <footer className="flex h-[34px] shrink-0 bg-linear-to-b from-[#3a7cf0] via-[#2a62dc] via-30% to-[#1f4fc4]">
      <button className="mt-1 flex w-[101px] shrink-0 items-center rounded-r-[10px] bg-linear-to-b from-[#6bb663] via-[#3c963b] via-25% to-[#2b7f2b] pl-[9px] shadow-[inset_-3px_0_4px_#1d5f1f]">
        <svg viewBox="0 0 20 20" className="size-5" aria-hidden="true">
          <path d="M3 3q4-2 7 0L8 9q-3-2-7 0z" fill="#ee5a2a" /><path d="M11 4q3 2 7 0l-2 6q-4 2-7 0z" fill="#8ccf3c" />
          <path d="M1 10q4-2 7 0l-2 6q-3-2-7 0z" fill="#4a90ee" /><path d="M8 11q4 2 7 0l-2 6q-3 2-7 0z" fill="#f8cf3a" />
        </svg>
        <span className='ml-2 font-["Liberation_Sans","Noto_Sans_CJK_SC",sans-serif] text-[20px] leading-[28px] text-white italic [text-shadow:1px_1px_1px_#1a4a1a]'>开始</span>
      </button>
      <TaskGrip />
      <div className="flex min-w-0 flex-1">
        {tasks.map((task, i) => (
          <button
            key={i}
            className={`${MONO} mt-[7px] mb-[2px] flex w-40 min-w-0 items-center gap-1 rounded-[2px] border pl-[9px] text-[11px] leading-[20px] text-white ${
              task.current ? 'border-[#17409a] bg-[#1d4fb6]' : 'border-[#4a86f4] border-r-[#2457c4] bg-linear-to-b from-[#4a8cfa] to-[#3571e6]'
            }`}
          >
            {task.icon === 'app' ? <AppIcon /> : <svg viewBox="0 0 16 16" className="size-4 shrink-0" aria-hidden="true">{taskIcons[task.icon]}</svg>}
            <span className="truncate"><Mixed text={task.text} cjk="text-[13px]" /></span>
          </button>
        ))}
        <div className="ml-[25px] flex"><TaskGrip /></div>
      </div>
      <div className={`${MONO} mt-[5px] flex w-[129px] shrink-0 items-center text-[12px] text-white`}>
        <button aria-label="显示隐藏的图标" className="z-10 flex size-[18px] items-center justify-center rounded-full border border-[#a6cdf8] bg-linear-to-b from-[#59acf5] to-[#1766d2]">
          <svg viewBox="0 0 10 10" className="size-[10px]" fill="none"><path d="M7 1L3 5l4 4" stroke="#fff" strokeWidth="2" /></svg>
        </button>
        <div className="-ml-[9px] flex h-full flex-1 items-center gap-[2px] border-l border-[#0d4dab] bg-linear-to-b from-[#27a9f5] via-[#1293ea] to-[#0f83dc] pl-[9px]">
          <svg viewBox="0 0 16 16" className="size-4" aria-hidden="true">
            <ellipse cx="8" cy="9" rx="6" ry="6" fill="#16181a" /><circle cx="8" cy="5" r="4" fill="#16181a" /><ellipse cx="8" cy="11" rx="4" ry="4" fill="#fff" />
            <circle cx="6.500" cy="4" r="1.300" fill="#fff" /><circle cx="9.500" cy="4" r="1.300" fill="#fff" /><path d="M6 6h4l-2 2z" fill="#f2a41c" /><path d="M4 8q4 2 8 0" stroke="#8d8f91" fill="none" /><path d="M4 15h3M9 15h3" stroke="#c9a23c" strokeWidth="1.500" />
          </svg>
          <svg viewBox="0 0 16 16" className="size-4" aria-hidden="true">
            <path d="M7 8l6 2 1 4-5 1-4-4z" fill="#ccd3d8" stroke="#5b656c" /><path d="M2 2l7 1-2 2 3 3-2 2-3-3-2 2z" fill="#34b42e" stroke="#0f6b12" />
          </svg>
          <svg viewBox="0 0 16 16" className="size-4" aria-hidden="true">
            <path d="M6 1h9v8H6z" fill="#253c8c" stroke="#c4cfdf" /><path d="M1 6h9v7H1z" fill="#2f3f94" stroke="#d5dcea" /><path d="M3 15h6" stroke="#d5dcea" strokeWidth="2" />
          </svg>
          <time className="ml-[7px]">12:10</time>
        </div>
      </div>
    </footer>
  );
}

export default function App() {
  return (
    <div className="flex h-screen flex-col overflow-hidden">
      <TitleBar />
      <MenuBar />
      <Toolbar />
      <StatusRow />
      <div className="flex min-h-0 flex-1">
        <aside className="flex w-[9px] shrink-0 flex-col gap-[10px] bg-[#d5e4ed] pt-[227px] pl-px">
          <Splitter tone="border-[#bccdd9] bg-[#d0e1ec]" />
          <Splitter tone="border-[#7c93a5] bg-[#d0e1ec]" />
        </aside>
        <main className="min-w-0 flex-1 bg-linear-to-b from-[#c6dbea] via-[#91aed0] to-[#5d7ca9]">
          <Bike />
        </main>
        <FeatureTools />
      </div>
      <Taskbar />
    </div>
  );
}
